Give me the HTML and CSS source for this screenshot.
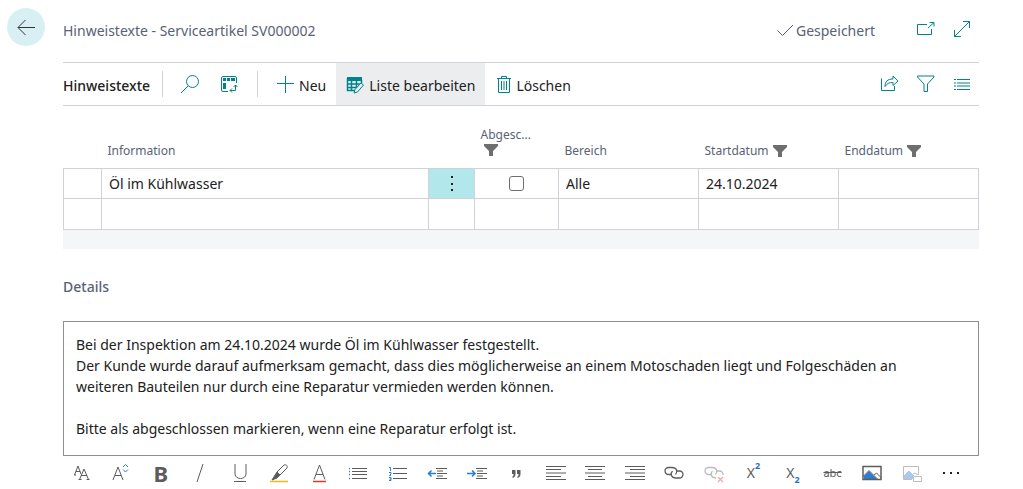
FILE: index.html
```
<!DOCTYPE html>
<html lang="de">
<head>
<meta charset="utf-8">
<meta name="viewport" content="width=device-width, initial-scale=1">
<title>Hinweistexte - Serviceartikel SV000002</title>
<link rel="stylesheet" href="styles.css">
</head>
<body>
<div class="page">
  <header class="header">
    <button class="back" type="button" aria-label="Zurück"><svg width="20" height="18" viewBox="0 0 20 18"><path d="M19 9.500H2M9.500 2L2 9.500l7.500 7.500"/></svg></button>
    <h1 class="title">Hinweistexte - Serviceartikel SV000002</h1>
    <div class="saved"><svg width="17" height="13" viewBox="0 0 17 13"><path d="M.5 6.500L5.500 11.500 16 1"/></svg><span>Gespeichert</span></div>
    <div class="window-tools">
      <button class="icon-button" type="button" aria-label="In neuem Fenster öffnen"><svg width="18" height="18" viewBox="0 0 18 18"><path d="M10 4.500H.5v10h14V9M11 8l6-5.500M12.500 2.500h4.500v4"/></svg></button>
      <button class="icon-button" type="button" aria-label="Vergrößern"><svg width="18" height="18" viewBox="0 0 18 18"><path d="M1.500 16.500l15-15M10 1.500h6.500V8M1.500 10v6.500H8"/></svg></button>
    </div>
  </header>

  <main class="content">
    <nav class="actions" aria-label="Aktionen">
      <h2 class="actions-title">Hinweistexte</h2>
      <div class="action-group">
        <button class="icon-button" type="button" aria-label="Suchen"><svg width="20" height="20" viewBox="0 0 20 20"><circle cx="12.500" cy="7.500" r="6"/><path d="M8 12l-7 7"/></svg></button>
        <button class="icon-button" type="button" aria-label="Ansicht analysieren"><svg width="18" height="18" viewBox="0 0 18 18"><path d="M8 16.500H3A1.500 1.500 0 0 1 1.500 15V3A1.500 1.500 0 0 1 3 1.500h12A1.500 1.500 0 0 1 16.500 3v5"/><path class="solid" d="M3 3h3v3H3zM7 3h3v3H7zM11 3h4v3h-4zM3 8h3v6H3z"/><path d="M10 15.500h5.500V10M12 13.500l-2 2 2 2M13.500 12l2-2 2 2"/></svg></button>
      </div>
      <div class="action-group commands">
        <button class="command" type="button"><svg width="18" height="18" viewBox="0 0 18 18"><path d="M9.500 0v17M1 7.500h17"/></svg>Neu</button>
        <button class="command active" type="button"><svg width="18" height="18" viewBox="0 0 18 18"><path class="solid" d="M1 1h15v4H1z"/><path class="thick" d="M1.500 2v12.500H9M1.500 8h13M1.500 11.500H10M5.500 4v10.500M10.500 4v8M15.500 4v3"/><path class="pencil" d="M8 17l1-3.500L15 7l2.500 2-6 7z"/></svg>Liste bearbeiten</button>
        <button class="command" type="button"><svg width="14" height="18" viewBox="0 0 14 18"><path d="M0 2.500h14M4.500 2.500v-2h5v2M1.500 3v13.500h11V3M4.500 5v9M7 5v9M9.500 5v9"/></svg>Löschen</button>
      </div>
      <div class="view-tools">
        <button class="icon-button" type="button" aria-label="Teilen"><svg width="20" height="18" viewBox="0 0 20 18"><path d="M1.500 3.500v12h13V11M5 11.500c0-5 2.500-7.500 8-7.500V1l5 5-5 4.500V7.500c-4 0-6 1-8 4z"/></svg></button>
        <button class="icon-button" type="button" aria-label="Filtern"><svg width="20" height="18" viewBox="0 0 20 18"><path d="M1.500 1v1L8 9v7.500h3.500V9L18 2V1z"/></svg></button>
        <button class="icon-button" type="button" aria-label="Listenansicht"><svg width="18" height="18" viewBox="0 0 18 18"><path d="M1 4.500h2M4 4.500h13M1 8h2M4 8h13M1 11h2M4 11h13M1 14.500h2M4 14.500h13"/></svg></button>
      </div>
    </nav>

    <div class="grid">
      <table class="table">
        <colgroup><col class="col-mark"><col><col class="col-menu"><col class="col-done"><col class="col-data"><col class="col-data"><col class="col-data"></colgroup>
        <thead>
          <tr>
            <td></td>
            <th scope="col">Information</th>
            <td></td>
            <th scope="col"><span class="stacked"><span id="done-label">Abgesc...</span><svg class="funnel" width="14" height="12" viewBox="0 0 14 12"><path d="M0 0h14v2L9 7v5H5V7L0 2z"/></svg></span></th>
            <th scope="col">Bereich</th>
            <th scope="col"><span class="filtered">Startdatum<svg class="funnel" width="14" height="12" viewBox="0 0 14 12"><path d="M0 0h14v2L9 7v5H5V7L0 2z"/></svg></span></th>
            <th scope="col"><span class="filtered">Enddatum<svg class="funnel" width="14" height="12" viewBox="0 0 14 12"><path d="M0 0h14v2L9 7v5H5V7L0 2z"/></svg></span></th>
          </tr>
        </thead>
        <tbody>
          <tr>
            <td></td>
            <td>Öl im Kühlwasser</td>
            <td class="menu-cell"><button class="row-menu" type="button" aria-label="Weitere Optionen"><svg width="4" height="18" viewBox="0 0 4 18"><path d="M1 2h2v2H1zM1 9h2v2H1zM1 15h2v2H1z"/></svg></button></td>
            <td class="check-cell"><input class="check" type="checkbox" aria-labelledby="done-label"></td>
            <td>Alle</td>
            <td>24.10.2024</td>
            <td></td>
          </tr>
          <tr><td></td><td></td><td></td><td></td><td></td><td></td><td></td></tr>
        </tbody>
      </table>
    </div>

    <section class="details">
      <h2 class="details-title"><label for="details-text">Details</label></h2>
      <textarea class="details-text" id="details-text" rows="5" spellcheck="false">Bei der Inspektion am 24.10.2024 wurde Öl im Kühlwasser festgestellt.
Der Kunde wurde darauf aufmerksam gemacht, dass dies möglicherweise an einem Motoschaden liegt und Folgeschäden an weiteren Bauteilen nur durch eine Reparatur vermieden werden können.

Bitte als abgeschlossen markieren, wenn eine Reparatur erfolgt ist.</textarea>
      <div class="format-bar" role="toolbar" aria-label="Formatierung">
        <button class="format" type="button" aria-label="Schriftart"><svg width="20" height="20" viewBox="0 0 20 20"><path d="M2.500 12l3.500-9 3 8M4 8.500h4M7.500 16.500L12 6l4.500 10.500M9 12.500h6M2 12h2M6.500 16.500h3M14.500 16.500h3"/></svg></button>
        <button class="format" type="button" aria-label="Schriftgrad"><svg width="20" height="20" viewBox="0 0 20 20"><path d="M2 17L7 4l5 13M4 12.500h6"/><path class="blue" d="M12 4l2.500-2.500L17 4M12 6.500L14.500 9 17 6.500"/></svg></button>
        <button class="format bold" type="button" aria-label="Fett">B</button>
        <button class="format" type="button" aria-label="Kursiv"><svg width="20" height="20" viewBox="0 0 20 20"><path d="M7 19l6-18"/></svg></button>
        <button class="format" type="button" aria-label="Unterstrichen"><svg width="20" height="20" viewBox="0 0 20 20"><path d="M5 1v10c0 6 11 6 11 0V1M4 18.500h12"/></svg></button>
        <button class="format" type="button" aria-label="Hervorheben"><svg width="20" height="20" viewBox="0 0 20 20"><path class="yellow" d="M1 18.500h18"/><path d="M8 9l7-7c2-1 4 1 3 3l-7 7z"/><path class="gray-fill" d="M8 9l3 3-3 3-5 2 2.500-4z"/></svg></button>
        <button class="format" type="button" aria-label="Schriftfarbe"><svg width="20" height="20" viewBox="0 0 20 20"><path d="M5 16.500L10.500 2 16 16.500M7 11.500h7"/><path class="red thick" d="M4 18.500h13"/></svg></button>
        <button class="format" type="button" aria-label="Aufzählung"><svg width="20" height="20" viewBox="0 0 20 20"><path class="blue thick" d="M1 5.500h1M1 8.500h1M1 11.500h1M1 15.500h1"/><path d="M4 5.500h15M4 8.500h15M4 11.500h15M4 15.500h15"/></svg></button>
        <button class="format" type="button" aria-label="Nummerierung"><svg width="20" height="20" viewBox="0 0 20 20"><path class="blue" d="M1 4.500h1.500V8M1 9.500h2v1.500L1.500 12.500H3M1 14.500h2v3H1M1.500 16H3"/><path d="M5 5.500h14M5 10.500h14M5 15.500h14"/></svg></button>
        <button class="format" type="button" aria-label="Einzug verkleinern"><svg width="20" height="20" viewBox="0 0 20 20"><path class="blue thick" d="M9 10.500H1.500M4.500 7.500l-3 3 3 3"/><path d="M9 5.500h11M10 8h6M10 10.500h10M10 13h6M9 15.500h11"/></svg></button>
        <button class="format" type="button" aria-label="Einzug vergrößern"><svg width="20" height="20" viewBox="0 0 20 20"><path class="blue thick" d="M0 10.500h8M5 7.500l3 3-3 3"/><path d="M9 5.500h11M10 8h6M10 10.500h10M10 13h6M9 15.500h11"/></svg></button>
        <button class="format" type="button" aria-label="Zitat"><svg width="20" height="20" viewBox="0 0 20 20"><path class="mark" d="M6 7h3.500v4c0 2-1 3.500-3 4v-1.500c1-.5 1-1 1-2.500H6zM11 7h3.500v4c0 2-1 3.500-3 4v-1.500c1-.5 1-1 1-2.500H11z"/></svg></button>
        <button class="format" type="button" aria-label="Linksbündig"><svg width="20" height="20" viewBox="0 0 20 20"><path d="M0 3.500h20M0 6.500h15M0 10h20M0 13.500h15M0 16.500h20"/></svg></button>
        <button class="format" type="button" aria-label="Zentriert"><svg width="20" height="20" viewBox="0 0 20 20"><path d="M0 3.500h20M3 6.500h14M0 10h20M3 13.500h14M0 16.500h20"/></svg></button>
        <button class="format" type="button" aria-label="Rechtsbündig"><svg width="20" height="20" viewBox="0 0 20 20"><path d="M0 3.500h20M5 6.500h15M0 10h20M5 13.500h15M0 16.500h20"/></svg></button>
        <button class="format" type="button" aria-label="Link einfügen"><svg class="chain" width="20" height="20" viewBox="0 0 20 20"><path d="M8 11.500H4.500a3.500 3.500 0 0 1 0-7H8c5 0 6 4.500 3.500 7M12 8h3.500a3.500 3.500 0 0 1 0 7H12c-5 0-6-4.500-3.500-7"/></svg></button>
        <button class="format faded" type="button" aria-label="Link entfernen"><svg class="chain" width="20" height="20" viewBox="0 0 20 20"><path d="M8 11.500H4.500a3.500 3.500 0 0 1 0-7H8c5 0 6 4.500 3.500 7M19 12a3.500 3.500 0 0 0-3.500-4H12M12 15c-5 0-6-4.500-3.500-7"/><path class="red" d="M14 14l5 5M19 14l-5 5"/></svg></button>
        <button class="format script" type="button" aria-label="Hochgestellt">X<sup>2</sup></button>
        <button class="format script" type="button" aria-label="Tiefgestellt">X<sub>2</sub></button>
        <button class="format strike" type="button" aria-label="Durchgestrichen">abc</button>
        <button class="format" type="button" aria-label="Bild einfügen"><svg width="20" height="20" viewBox="0 0 20 20"><path class="blue-fill" d="M2 16v-3l5-5 8 8z"/><path class="thick" d="M1 3.500h18v13H1z"/><path d="M1 13.500l6-6 9 9M12 12l2.500-2 5 5"/></svg></button>
        <button class="format faded" type="button" aria-label="Bild bearbeiten"><svg width="20" height="20" viewBox="0 0 20 20"><path d="M10 16.500H1.500v-13h15V12M2 13l5-5 5 5M11 11l2-1 3 2M11.500 13.500h8v5h-8z"/><path class="blue-fill" d="M2 16v-3l5-5 4 4v4z"/></svg></button>
        <button class="format" type="button" aria-label="Weitere"><svg width="20" height="20" viewBox="0 0 20 20"><path class="dots" d="M2 9h2v2H2zM9 9h2v2H9zM16 9h2v2h-2z"/></svg></button>
      </div>
    </section>
  </main>
</div>
</body>
</html>
```
FILE: styles.css
```
* { box-sizing: border-box; }

body {
  margin: 0;
  background: #fff;
  color: #212121;
  font: 14px/20px "Noto Sans", "Segoe UI", sans-serif;
}

h1, h2 { margin: 0; font-size: 14px; }

button {
  margin: 0;
  padding: 0;
  border: 0;
  background: none;
  color: inherit;
  font: inherit;
  cursor: pointer;
}

svg {
  flex: none;
  fill: none;
  stroke: currentColor;
}

.page { padding: 8px 44px 0 7px; }

.header {
  display: flex;
  align-items: center;
  color: #586275;
}

.back {
  display: grid;
  place-items: center;
  width: 38px;
  height: 38px;
  margin-right: 18px;
  border-radius: 50%;
  background: #d8f0f3;
  color: #333;
}

.title {
  flex: 1;
  padding-top: 8px;
  font-weight: 400;
}

.saved {
  display: flex;
  align-items: center;
  gap: 2px;
  padding-top: 8px;
}

.saved svg { margin-bottom: 2px; }

.window-tools,
.view-tools {
  display: flex;
  gap: 16px;
  padding-right: 7px;
  color: #00838a;
}

.window-tools { padding-top: 4px; margin-left: 41px; }

.icon-button {
  display: grid;
  place-items: center;
  width: 20px;
  height: 20px;
  color: #00838a;
}

.content { padding: 16px 0 0 56px; }

.actions {
  display: flex;
  align-items: center;
  height: 44px;
  border-top: 1px solid #d0d2d8;
  border-bottom: 1px solid #d0d2d8;
}

.actions-title { padding-top: 4px; font-weight: 500; }

.action-group {
  display: flex;
  align-items: center;
  gap: 19px;
  height: 26px;
  margin-left: 12px;
  padding: 0 18px 0 17px;
  border-left: 1px solid #d0d2d8;
}

.action-group.commands {
  gap: 0;
  margin-left: 0;
  padding: 0;
}

.command {
  display: flex;
  align-items: center;
  gap: 5px;
  height: 42px;
  padding: 4px 10px 0;
  white-space: nowrap;
}

.command svg { margin-bottom: 2px; color: #00838a; }
.command:first-child { padding-left: 18px; }
.command.active { background: #ebedef; }
.command:last-child { padding-left: 12px; }

.view-tools { margin-left: auto; }

.solid { fill: currentColor; stroke: none; }
.pencil { fill: #ebedef; }

.grid {
  margin-top: 14px;
  padding-bottom: 19px;
  background: linear-gradient(#fff, #fff) top / 100% 48px no-repeat #f5f6f8;
}

.table {
  width: 100%;
  border-collapse: collapse;
  table-layout: fixed;
  background: #fff;
}

.col-mark { width: 38px; }
.col-menu { width: 46px; }
.col-done { width: 84px; }
.col-data { width: 140px; }

.table thead td,
.table th {
  height: 48px;
  padding: 0 6px 7px;
  color: #586275;
  font-size: 12px;
  font-weight: 400;
  line-height: 20px;
  text-align: left;
  vertical-align: bottom;
}

.filtered {
  display: flex;
  align-items: center;
  gap: 4px;
}

.stacked {
  display: flex;
  flex-direction: column;
  line-height: 18px;
  padding-bottom: 5px;
}

.stacked .funnel { margin-left: 3px; }

.funnel { fill: #6e6e6e; stroke: none; }

.table tbody td {
  height: 30px;
  padding: 1px 7px 0;
  border: 1px solid #d0d2d8;
}

.table tbody tr:last-child td { height: 31px; }

.table .menu-cell {
  padding: 0;
  background: #b2e8ec;
}

.row-menu {
  display: grid;
  place-items: center;
  width: 100%;
  height: 28px;
}

.row-menu path,
.dots { fill: #212121; stroke: none; }

.table .check-cell { padding: 0; text-align: center; }

.check {
  display: block;
  width: 15px;
  height: 15px;
  margin: 0 auto;
  appearance: none;
  border: 1px solid #6e6e6e;
  border-radius: 3px;
  background: #fff;
}

.check:checked { background: #00838a; }

.details { padding-top: 28px; }

.details-title {
  margin-bottom: 24px;
  color: #586275;
  font-weight: 500;
}

.details-text {
  display: block;
  width: 100%;
  padding: 12px 32px 16px 12px;
  border: 1px solid #8a8f9a;
  border-radius: 0;
  background: #fff;
  color: #212121;
  font: 14px/21px "Noto Sans", "Segoe UI", sans-serif;
  outline: 0;
  overflow: hidden;
  resize: none;
}

.format-bar {
  display: flex;
  margin-left: -1px;
  padding-right: 8px;
}

.format {
  display: flex;
  flex: 1 1 0;
  align-items: center;
  justify-content: center;
  min-width: 0;
  height: 34px;
  color: #5c5c5c;
}

.bold { font-size: 22px; font-weight: 700; }
.strike { font-size: 11px; text-decoration: line-through; }
.script { font-size: 14px; }
.script sup,
.script sub { color: #2b6fc9; font-size: 9px; font-weight: 700; line-height: 10px; }
.script sup { align-self: flex-start; padding-top: 5px; }
.script sub { align-self: flex-end; padding-bottom: 5px; }

.faded { opacity: 0.4; }
.thick { stroke-width: 1.5; }
.chain { stroke-width: 1.3; }
.blue { stroke: #2b7cd3; }
.red { stroke: #d83b21; }
.yellow { stroke: #fcb714; stroke-width: 1.5; }
.gray-fill { fill: currentColor; }
.mark { fill: currentColor; stroke: none; }
.blue-fill { fill: #2b7cd3; stroke: none; }
```
